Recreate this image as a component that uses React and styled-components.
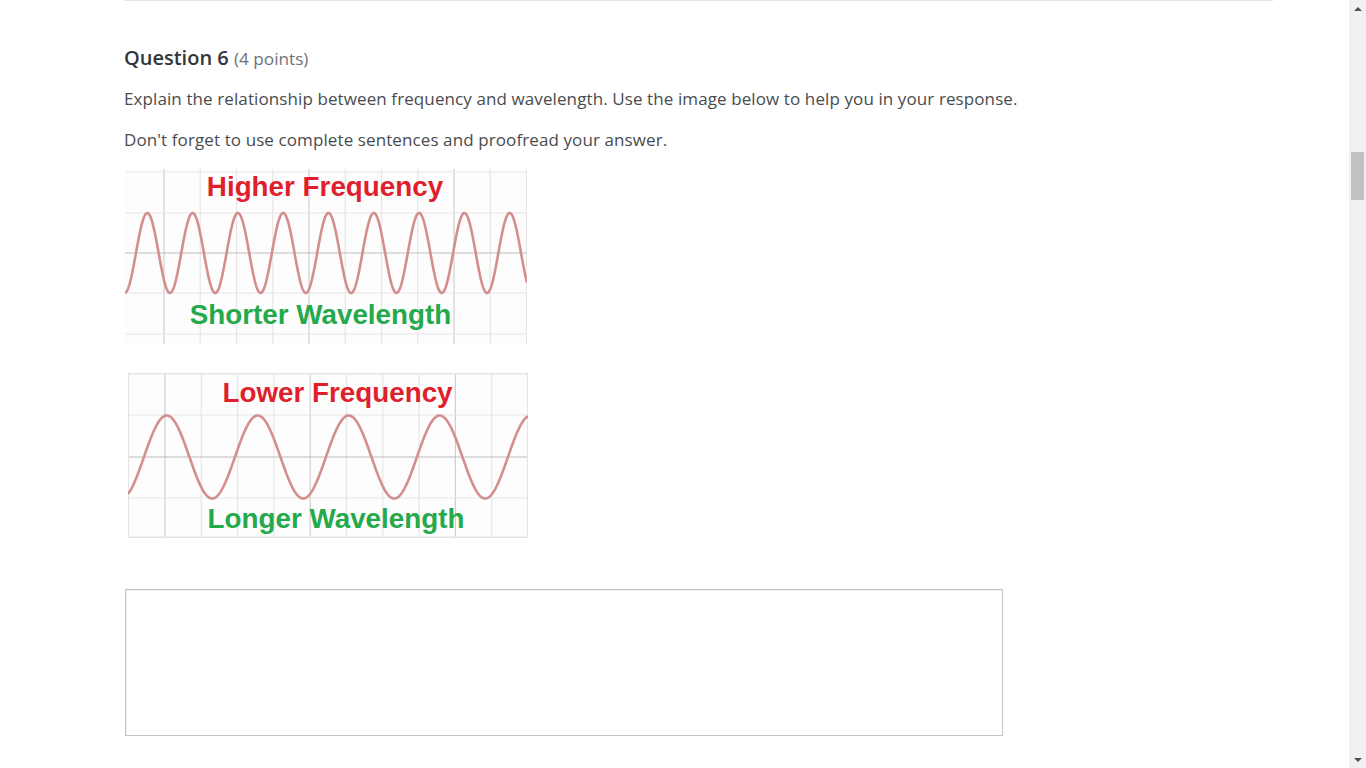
import React from 'react'
import styled, { createGlobalStyle } from 'styled-components'

const GlobalStyle = createGlobalStyle`
  html, body {
    margin: 0;
    padding: 0;
    height: 100%;
    overflow: hidden;
    background: #ffffff;
  }
  body {
    font-family: "Open Sans", "Liberation Sans", sans-serif;
    color: #494c4e;
  }
`

const charts = [
  {
    left: 125,
    width: 402,
    height: 175,
    cols: { start: 39, step: 36.25, count: 11, major: [0, 4, 8] },
    rows: [3, 44, 84, 124, 165],
    wave: { mid: 84, amp: 40, period: 45.3, peak: 22.3 },
    top: { text: 'Higher Frequency', x: 200, y: 26.5 },
    bottom: { text: 'Shorter Wavelength', x: 195.5, y: 155 },
    framed: false,
  },
  {
    left: 128,
    width: 400,
    height: 165,
    cols: { start: 37, step: 36.3, count: 10, major: [0, 4, 8] },
    rows: [1, 42, 84, 125, 164],
    wave: { mid: 84, amp: 41.5, period: 91, peak: 38.7 },
    top: { text: 'Lower Frequency', x: 209.5, y: 28.7 },
    bottom: { text: 'Longer Wavelength', x: 208, y: 154.5 },
    framed: true,
  },
]

function wavePath(w, width) {
  let d = ''
  for (let x = 0; x <= width; x += 0.5) {
    const y = w.mid - w.amp * Math.cos((2 * Math.PI * (x - w.peak)) / w.period)
    d += (x === 0 ? 'M' : 'L') + x.toFixed(2) + ' ' + y.toFixed(2) + ' '
  }
  return d
}

function WaveChart({ chart }) {
  const { width, height, cols, rows, wave } = chart
  const xs = Array.from({ length: cols.count }, (_, i) => cols.start + cols.step * i)
  return (
    <Chart $left={chart.left} width={width} height={height} viewBox={`0 0 ${width} ${height}`}>
      <rect x="0" y="0" width={width} height={height} fill="#fdfdfd" />
      {xs.map((x, i) => (
        <line
          key={'c' + i}
          x1={x}
          x2={x}
          y1="0"
          y2={height}
          stroke={cols.major.includes(i) ? '#cfcfcf' : '#e6e6e6'}
          strokeWidth="1.2"
        />
      ))}
      {rows.map((y, i) => (
        <line
          key={'r' + i}
          x1="0"
          x2={width}
          y1={y}
          y2={y}
          stroke={i === 2 ? '#bdbdbd' : '#e6e6e6'}
          strokeWidth="1.2"
        />
      ))}
      {chart.framed && (
        <rect x="0.5" y="0.5" width={width - 1} height={height - 1} fill="none" stroke="#e4e4e4" />
      )}
      <path d={wavePath(wave, width)} fill="none" stroke="#d38f8d" strokeWidth="2.6" />
      <Label x={chart.top.x} y={chart.top.y} fill="#e01f2d">{chart.top.text}</Label>
      <Label x={chart.bottom.x} y={chart.bottom.y} fill="#24a94b">{chart.bottom.text}</Label>
    </Chart>
  )
}

export default function App() {
  return (
    <>
      <GlobalStyle />
      <Screen>
        <Page>
          <Rule />
          <Heading>
            Question 6 <Points>(4 points)</Points>
          </Heading>
          <Text $gap={14}>Explain the relationship between frequency and wavelength. Use the image below to help you in your response.</Text>
          <Text $gap={17}>Don't forget to use complete sentences and proofread your answer.</Text>
          <Figure>
            <WaveChart chart={charts[0]} />
            <WaveChart chart={charts[1]} />
          </Figure>
          <Answer />
        </Page>
        <Scrollbar>
          <Arrow $dir="up" />
          <Track>
            <Thumb />
          </Track>
          <Arrow $dir="down" />
        </Scrollbar>
      </Screen>
    </>
  )
}

const Screen = styled.div`
  display: flex;
  width: 100vw;
  height: 100vh;
  overflow: hidden;
`

const Page = styled.div`
  flex: 1;
  display: flex;
  flex-direction: column;
  padding-left: 124px;
`

const Rule = styled.div`
  width: 1149px;
  height: 1px;
  background: #e3e3e3;
`

const Heading = styled.h2`
  margin: 43px 0 0;
  font-size: 20px;
  line-height: 28px;
  font-weight: 600;
  color: #333639;
`

const Points = styled.span`
  font-size: 17.2px;
  font-weight: 400;
  color: #6e7376;
`

const Text = styled.p`
  margin: ${(p) => p.$gap}px 0 0;
  font-size: 17px;
  letter-spacing: 0.1px;
  line-height: 24px;
  color: #494c4e;
`

const Figure = styled.div`
  display: flex;
  flex-direction: column;
  gap: 29px;
  margin-top: 17px;
  margin-left: -124px;
`

const Chart = styled.svg`
  display: block;
  margin-left: ${(p) => p.$left}px;
`

const Label = styled.text`
  font-family: "Liberation Sans", Arial, sans-serif;
  font-weight: 700;
  font-size: 27.8px;
  text-anchor: middle;
`

const Answer = styled.div`
  width: 876px;
  height: 145px;
  margin: 51px 0 0 1px;
  border: 1px solid #c4c4c4;
  box-shadow: inset 1px 1px 1px rgba(0, 0, 0, 0.06);
  background: #fff;
`

const Scrollbar = styled.div`
  width: 17px;
  flex-shrink: 0;
  display: flex;
  flex-direction: column;
  background: #f1f1f1;
`

const Arrow = styled.div`
  height: 17px;
  display: flex;
  align-items: center;
  justify-content: center;
  &::after {
    content: '';
    width: 0;
    height: 0;
    border-left: 4px solid transparent;
    border-right: 4px solid transparent;
    ${(p) => (p.$dir === 'up' ? 'border-bottom: 4px solid #505050;' : 'border-top: 4px solid #505050;')}
  }
`

const Track = styled.div`
  flex: 1;
  padding: 135px 2px 0;
`

const Thumb = styled.div`
  height: 48px;
  background: #c1c1c1;
`
